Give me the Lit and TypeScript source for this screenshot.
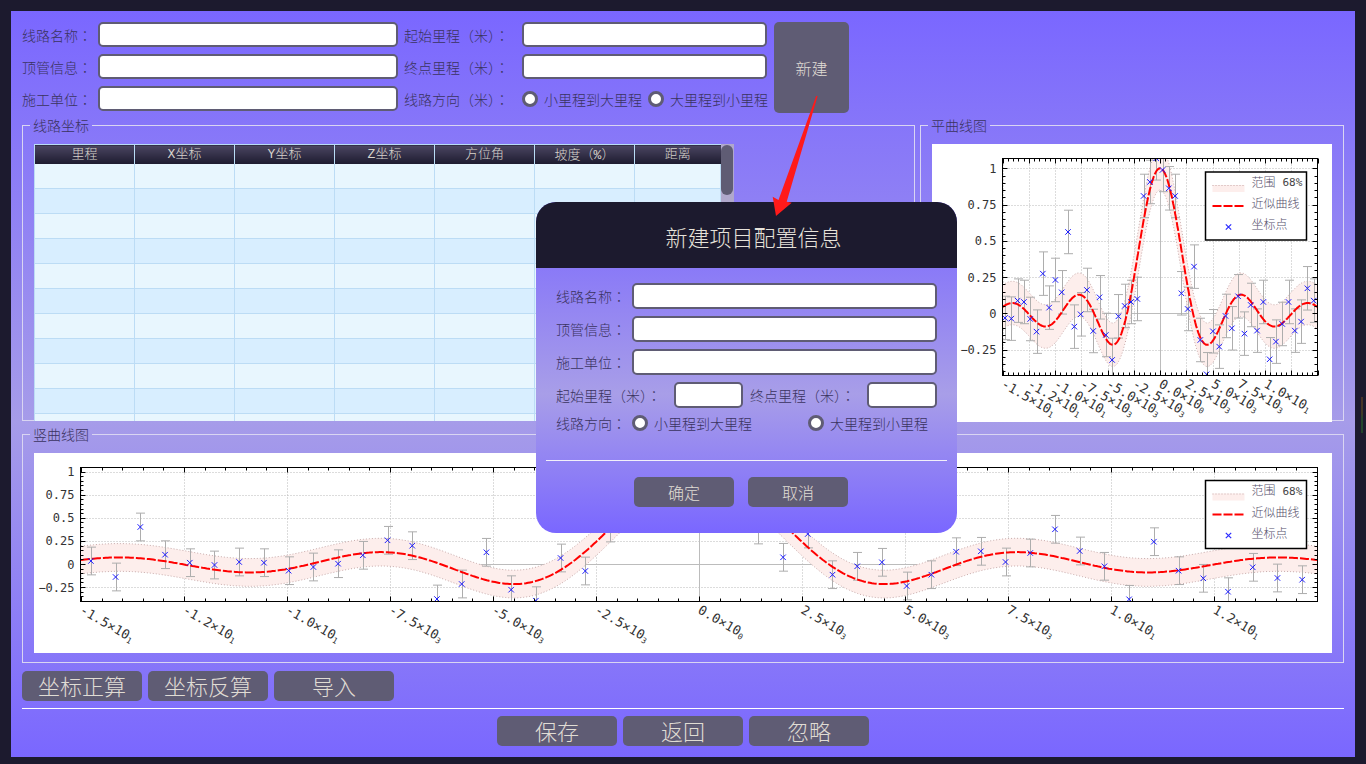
import { LitElement, html, css, svg } from "lit";
import { customElement } from "lit/decorators.js";

const sinc = (x: number) => (Math.abs(x) < 1e-6 ? 1 : Math.sin(x) / x);
const X0 = -14.76;
const DX = 0.6;

// scatter values of each chart, read from the reference
const planeY = [609,611,557,561,612,650,476,578,495,532,351,635,598,525,648,547,660,735,604,573,561,552,243,201,130,165,220,243,535,582,455,675,778,649,695,603,640,544,656,570,647,561,733,680,627,561,647,620,520,557].map((v) => (595 - v) / 435);
const vertY = [561,577,527,554.7,562.7,565,562,562.7,570.7,567,563.7,555.3,540.3,545.7,599,584,552.3,589.7,600.7,558,571,528,505,480,478,495,510,530,557.3,534,574.7,566.3,562.3,586,574.7,551.7,551.3,562,553,529.3,551,566.3,599.3,541.7,570.7,578.3,591.7,567.3,578,579.7].map((v) => (564 - v) / 92.4);

interface ChartCfg {
  id: string; w: number; h: number; L: number; R: number; T: number; B: number;
  cx: number; sx: number; y0: number; sy: number; pts: number[]; labels: string[][];
  lx: number; ly: number;
}

const LABELS: string[][] = [["-1.5×10","1"],["-1.2×10","1"],["-1.0×10","1"],["-7.5×10","3"],["-5.0×10","3"],["-2.5×10","3"],["0.0×10","0"],["2.5×10","3"],["5.0×10","3"],["7.5×10","3"],["1.0×10","1"],["1.2×10","1"]];

// centred full-width punctuation, as in the reference's font
const t = (s: string) =>
  s.split(/([（）：]+)/).map((p) => (/^[（）：]+$/.test(p) ? html`<span class="tc">${p}</span>` : p));

function chart(c: ChartCfg) {
  const px = (x: number) => c.cx + x * c.sx;
  const py = (y: number) => c.y0 - y * c.sy;
  const xs: number[] = [];
  for (let x = -15; x <= 15.001; x += 0.05) xs.push(x);
  const line = (f: (x: number) => number) => xs.map((x) => `${px(x).toFixed(1)},${py(f(x)).toFixed(1)}`).join(" ");
  const up = line((x) => sinc(x) + 0.15);
  const lo = line((x) => sinc(x) - 0.15);
  const loRev = xs.slice().reverse().map((x) => `${px(x).toFixed(1)},${py(sinc(x) - 0.15).toFixed(1)}`).join(" ");

  const xMajor: number[] = [];
  for (let i = 0; i <= 12; i++) xMajor.push(-15 + i * 2.5);
  const xMinor: number[] = [];
  for (let x = -15; x <= 15.001; x += 0.5) xMinor.push(x);
  const yMajor = [-0.25, 0, 0.25, 0.5, 0.75, 1];
  const yMinor: number[] = [];
  for (let y = -0.4; y <= 1.05; y += 0.05) yMinor.push(y);
  const isMajorX = (x: number) => Math.abs(x / 2.5 - Math.round(x / 2.5)) < 0.01;
  const isMajorY = (y: number) => Math.abs(y / 0.25 - Math.round(y / 0.25)) < 0.01;
  const yText = (y: number) => (y === 1 ? "1" : y === 0 ? "0" : y < 0 ? "−0.25" : String(y));

  return svg`
  <svg class="plot" width=${c.w} height=${c.h} viewBox="0 0 ${c.w} ${c.h}">
    <defs><clipPath id=${c.id}><rect x=${c.L} y=${c.T} width=${c.R - c.L} height=${c.B - c.T}></rect></clipPath></defs>
    <g clip-path="url(#${c.id})">
      ${xMajor.filter((x) => x !== 0).map((x) => svg`<line class="grid" x1=${Math.round(px(x)) + 0.5} x2=${Math.round(px(x)) + 0.5} y1=${c.T} y2=${c.B}></line>`)}
      ${yMajor.filter((y) => y !== 0).map((y) => svg`<line class="grid" y1=${Math.round(py(y)) + 0.5} y2=${Math.round(py(y)) + 0.5} x1=${c.L} x2=${c.R}></line>`)}
      <line class="zero" x1=${Math.round(px(0)) + 0.5} x2=${Math.round(px(0)) + 0.5} y1=${c.T} y2=${c.B}></line>
      <line class="zero" y1=${Math.round(py(0)) + 0.5} y2=${Math.round(py(0)) + 0.5} x1=${c.L} x2=${c.R}></line>
      <polygon class="band" points="${up} ${loRev}"></polygon>
      <polyline class="edge" points=${up}></polyline>
      <polyline class="edge" points=${lo}></polyline>
      ${c.pts.map((v, i) => {
        const x = Math.round(px(X0 + i * DX)) + 0.5;
        const top = py(v + 0.15);
        const bot = py(v - 0.15);
        return svg`<path class="err" d="M${x - 4.5} ${top}H${x + 4.5}M${x} ${top}V${bot}M${x - 4.5} ${bot}H${x + 4.5}"></path>`;
      })}
      <polyline class="curve" points=${line(sinc)}></polyline>
      ${c.pts.map((v, i) => {
        const x = px(X0 + i * DX);
        const y = py(v);
        return svg`<path class="pt" d="M${x - 2.75} ${y - 2.75}L${x + 2.75} ${y + 2.75}M${x - 2.75} ${y + 2.75}L${x + 2.75} ${y - 2.75}"></path>`;
      })}
    </g>
    ${xMinor.map((x) => {
      const p = Math.round(px(x)) + 0.5;
      const l = isMajorX(x) ? 5 : 3;
      return svg`<path class="tick" d="M${p} ${c.B}v${-l}M${p} ${c.T}v${l}"></path>`;
    })}
    ${yMinor.map((y) => {
      const p = Math.round(py(y)) + 0.5;
      const l = isMajorY(y) ? 5 : 3;
      return svg`<path class="tick" d="M${c.L} ${p}h${l}M${c.R} ${p}h${-l}"></path>`;
    })}
    <rect class="box" x=${c.L} y=${c.T} width=${c.R - c.L} height=${c.B - c.T}></rect>
    ${yMajor.map((y) => svg`<text class="ylab" x=${c.L - 6} y=${py(y) + 4.5} text-anchor="end">${yText(y)}</text>`)}
    ${c.labels.map((l, i) => {
      const x = px(-15 + i * 2.5) - 2;
      const y = c.B + 11;
      return svg`<text class="xlab" transform="translate(${x} ${y}) rotate(30)">${l[0]}<tspan class="exp" dy="2">${l[1]}</tspan></text>`;
    })}
    <g transform="translate(${c.lx} ${c.ly})">
      <rect class="lbox" x="0" y="0" width="101" height="68"></rect>
      <rect class="lband" x="7" y="13" width="32" height="7"></rect>
      <line class="edge" x1="7" x2="39" y1="13.5" y2="13.5"></line>
      <line class="curve" x1="7" x2="39" y1="34" y2="34"></line>
      <path class="pt lpt" d="M20.3 52.3l5.4 5.4M20.3 57.7l5.4 -5.4"></path>
      <text class="ltxt" x="46" y="14.5">范围</text>
      <text class="ltxt num" x="77" y="14">68%</text>
      <text class="ltxt" x="46" y="36">近似曲线</text>
      <text class="ltxt" x="46" y="57">坐标点</text>
    </g>
  </svg>`;
}

@customElement("app-root")
export class AppRoot extends LitElement {
  static styles = css`
    :host {
      display: block;
      box-sizing: border-box;
      width: 1366px;
      height: 764px;
      padding: 11px;
      background: #1c1a2e;
      position: relative;
      overflow: hidden;
      font-family: "Noto Sans CJK SC", "Liberation Sans", sans-serif;
      font-size: 14px;
      font-weight: 300;
      color: #3a3360;
    }
    .tc { font-family: "Noto Sans CJK TC", sans-serif; }
    .panel {
      box-sizing: border-box;
      width: 1344px;
      height: 746px;
      padding: 11px;
      position: relative;
      background: linear-gradient(180deg, #7a67ff 0%, #a69ce9 55%, #7a67ff 100%);
    }
    .top { display: flex; gap: 7px; height: 91px; }
    .form {
      display: grid;
      grid-template-columns: 76px 300px 124px 245px;
      grid-auto-rows: 25px;
      row-gap: 7px;
      align-items: center;
    }
    .lab { white-space: nowrap; line-height: 25px; padding-top: 1px; }
    .lab2 { padding-left: 6px; }
    .input {
      box-sizing: border-box;
      height: 25px;
      background: #fff;
      border: 2px solid #5f5c74;
      border-radius: 5px;
    }
    .radios { display: flex; align-items: center; }
    .radio { display: flex; flex: none; align-items: center; gap: 6px; white-space: nowrap; }
    .r-first { width: 126px; }
    .dot {
      box-sizing: border-box;
      flex: none;
      width: 16px;
      height: 16px;
      background: #fff;
      border: 3px solid #5f5c74;
      border-radius: 50%;
    }
    .btn {
      display: flex;
      align-items: center;
      justify-content: center;
      background: #5f5c74;
      color: #e0dcd4;
      border-radius: 5px;
      white-space: nowrap;
    }
    .new { width: 75px; height: 91px; font-size: 16px; }
    .groups { display: flex; gap: 5px; margin-top: 3px; }
    fieldset {
      box-sizing: border-box;
      margin: 0;
      padding: 10px 11px 0;
      min-width: 0;
      border: 1px solid #d9d5f2;
    }
    legend {
      margin-left: -4px;
      padding: 0 3px;
      height: 18px;
      line-height: 18px;
      font-size: 14px;
      color: #3a3360;
    }
    .g-table { width: 893px; height: 305px; }
    .g-plane { width: 424px; height: 305px; }
    .g-vert { width: 1322px; height: 238px; margin-top: 4px; padding-bottom: 9px; }
    .tablebox {
      position: relative;
      width: 700px;
      height: 277px;
      overflow: hidden;
      background: #b0a8cc;
    }
    table {
      width: 687px;
      table-layout: fixed;
      border-collapse: collapse;
      background: #e8f6fe;
    }
    col.c { width: 100px; }
    th {
      box-sizing: border-box;
      height: 19px;
      padding: 0;
      font-family: "Liberation Mono", "Noto Sans CJK SC", monospace;
      font-size: 13px;
      font-weight: 300;
      color: #d8d4cc;
      background: linear-gradient(180deg, #4b4662 0%, #1c1a2e 100%);
      border-left: 1px solid #b9dcf5;
      border-top: 1px solid #b9dcf5;
      line-height: 15px;
    }
    td {
      box-sizing: border-box;
      height: 25px;
      padding: 0;
      border: 1px solid #bcdcf5;
      border-top: 0;
    }
    tr:nth-child(even) td { background: #d8eeff; }
    .thumb {
      position: absolute;
      right: 1px;
      top: 1px;
      width: 12px;
      height: 50px;
      background: #5f5c74;
      border-radius: 6px;
    }
    .white { background: #fff; overflow: hidden; }
    .w-plane { width: 400px; height: 278px; }
    .w-vert { width: 1298px; height: 200px; }
    .plot { display: block; }
    .grid { stroke: #b8b8b8; stroke-width: 1; stroke-dasharray: 1 2; }
    .zero { stroke: #bcbcbc; stroke-width: 1; }
    .band { fill: #fdeeec; stroke: none; }
    .edge { fill: none; stroke: #c6a9a9; stroke-width: 1; stroke-dasharray: 1 2; }
    .err { fill: none; stroke: #adadad; stroke-width: 1; }
    .curve { fill: none; stroke: #ff0000; stroke-width: 2; stroke-dasharray: 9 2; }
    .pt { fill: none; stroke: #1a1aff; stroke-width: 1; }
    .lpt { stroke: #2a2aff; stroke-width: 1.2; }
    .tick { fill: none; stroke: #000; stroke-width: 1; }
    .box { fill: none; stroke: #000; stroke-width: 1; }
    .ylab { font: 400 12px "DejaVu Sans Mono", monospace; fill: #333; }
    .xlab { font: 400 13px "DejaVu Sans Mono", monospace; fill: #333; }
    .exp { font-size: 8px; }
    .lbox { fill: #fff; stroke: #000; stroke-width: 1.5; }
    .lband { fill: #fdeeec; }
    .ltxt { font-size: 12px; font-weight: 300; fill: #55506a; }
    .num { font: 400 11px "DejaVu Sans Mono", monospace; fill: #444; }
    .tools { display: flex; gap: 6px; margin-top: 8px; }
    .big { box-sizing: border-box; width: 120px; height: 30px; padding-bottom: 2px; font-size: 22px; }
    .rule { height: 1px; margin: 7px 0; background: #fff; }
    .actions { display: flex; justify-content: center; gap: 6px; }
    .dialog {
      position: absolute;
      left: 525px;
      top: 191px;
      width: 421px;
      height: 331px;
      border-radius: 20px;
      overflow: hidden;
      background: linear-gradient(180deg, #7a67ff 0%, #a89ee8 58%, #7a67ff 100%);
    }
    .d-head {
      box-sizing: border-box;
      height: 66px;
      padding: 2px 0 0 14px;
      display: flex;
      align-items: center;
      justify-content: center;
      background: #1c1a2e;
      color: #e6e2da;
      font-size: 22px;
    }
    .d-body { padding: 15px 20px 0; display: flex; flex-direction: column; gap: 7px; }
    .d-row { display: flex; align-items: center; height: 26px; }
    .d-row .lab { width: 76px; flex: none; }
    .d-row .input { height: 26px; flex: 1; }
    .d-row .wide { width: 118px; }
    .d-row .wide2 { width: 124px; padding-left: 7px; box-sizing: border-box; }
    .d-row .short { flex: none; width: 69px; }
    .d-row .short2 { flex: none; width: 70px; }
    .d-radio { height: 16px; }
    .d-radio .radio { width: 176px; }
    .d-rule { height: 1px; background: #f2f0fa; margin: 29px 10px 0; }
    .d-act { display: flex; gap: 14px; margin: 16px 0 0 98px; }
    .d-btn { width: 100px; height: 30px; font-size: 16px; }
    .arrow { position: absolute; left: 0; top: 0; pointer-events: none; }
    .led {
      position: absolute;
      left: 1361px;
      top: 397px;
      width: 2px;
      height: 36px;
      background: linear-gradient(180deg, #4a3328 0%, #3f3a26 45%, #23452c 60%, #23452c 100%);
    }
  `;

  render() {
    const cols = ["里程", "X坐标", "Y坐标", "Z坐标", "方位角", "坡度（%）", "距离"];
    const rows = Array.from({ length: 11 });
    return html`
      <div class="panel">
        <div class="top">
          <div class="form">
            <span class="lab">${t("线路名称：")}</span><div class="input"></div>
            <span class="lab lab2">${t("起始里程（米）：")}</span><div class="input"></div>
            <span class="lab">${t("顶管信息：")}</span><div class="input"></div>
            <span class="lab lab2">${t("终点里程（米）：")}</span><div class="input"></div>
            <span class="lab">${t("施工单位：")}</span><div class="input"></div>
            <span class="lab lab2">${t("线路方向（米）：")}</span>
            <div class="radios">
              <span class="radio r-first"><i class="dot"></i>小里程到大里程</span>
              <span class="radio"><i class="dot"></i>大里程到小里程</span>
            </div>
          </div>
          <div class="btn new">新建</div>
        </div>

        <div class="groups">
          <fieldset class="g-table">
            <legend>线路坐标</legend>
            <div class="tablebox">
              <table>
                <colgroup>
                  ${cols.slice(0, 6).map(() => html`<col class="c" />`)}<col />
                </colgroup>
                <thead><tr>${cols.map((c) => html`<th>${t(c)}</th>`)}</tr></thead>
                <tbody>
                  ${rows.map(() => html`<tr>${cols.map(() => html`<td></td>`)}</tr>`)}
                </tbody>
              </table>
              <div class="thumb"></div>
            </div>
          </fieldset>
          <fieldset class="g-plane">
            <legend>平曲线图</legend>
            <div class="white w-plane">
              ${chart({ id: "cp", w: 400, h: 278, L: 70.5, R: 385.5, T: 14.5, B: 231.5, cx: 228, sx: 10.5, y0: 169.3, sy: 145, pts: planeY, labels: LABELS.slice(0, 11), lx: 273.5, ly: 28 })}
            </div>
          </fieldset>
        </div>

        <fieldset class="g-vert">
          <legend>竖曲线图</legend>
          <div class="white w-vert">
            ${chart({ id: "cv", w: 1298, h: 200, L: 46.5, R: 1283.5, T: 14.5, B: 148.5, cx: 665, sx: 41.2, y0: 111, sy: 92.4, pts: vertY, labels: LABELS, lx: 1171.5, ly: 27.5 })}
          </div>
        </fieldset>

        <div class="tools">
          <div class="btn big">坐标正算</div>
          <div class="btn big">坐标反算</div>
          <div class="btn big">导入</div>
        </div>
        <div class="rule"></div>
        <div class="actions">
          <div class="btn big">保存</div>
          <div class="btn big">返回</div>
          <div class="btn big">忽略</div>
        </div>

        <div class="dialog">
          <div class="d-head">新建项目配置信息</div>
          <div class="d-body">
            <div class="d-row"><span class="lab">${t("线路名称：")}</span><div class="input"></div></div>
            <div class="d-row"><span class="lab">${t("顶管信息：")}</span><div class="input"></div></div>
            <div class="d-row"><span class="lab">${t("施工单位：")}</span><div class="input"></div></div>
            <div class="d-row">
              <span class="lab wide">${t("起始里程（米）：")}</span><div class="input short"></div>
              <span class="lab wide2">${t("终点里程（米）：")}</span><div class="input short2"></div>
            </div>
            <div class="d-row d-radio">
              <span class="lab">${t("线路方向：")}</span>
              <span class="radio"><i class="dot"></i>小里程到大里程</span>
              <span class="radio"><i class="dot"></i>大里程到小里程</span>
            </div>
          </div>
          <div class="d-rule"></div>
          <div class="d-act">
            <div class="btn d-btn">确定</div>
            <div class="btn d-btn">取消</div>
          </div>
        </div>
      </div>
      <svg class="arrow" width="1366" height="764" viewBox="0 0 1366 764">
        <polygon fill="#ff1a1a" points="816.2,96 778.5,200 772.7,196.7 776,216 791.7,202.7 786.7,201.7 817.6,96"></polygon>
      </svg>
      <div class="led"></div>
    `;
  }
}
